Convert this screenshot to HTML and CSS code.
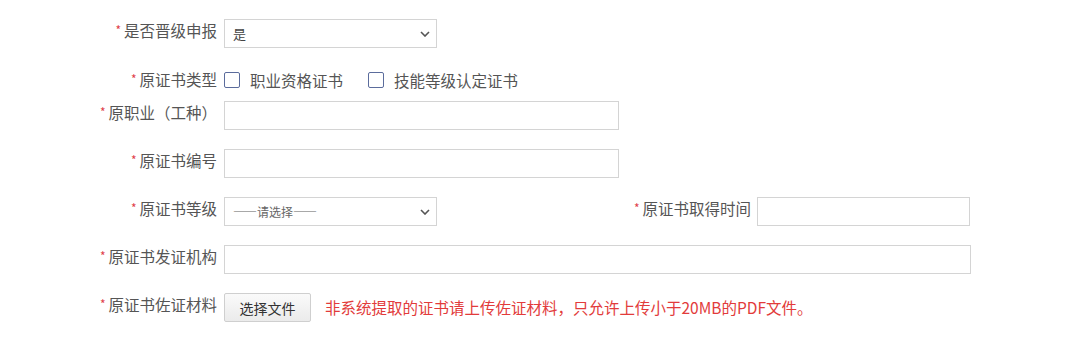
FILE: index.html
```html
<!DOCTYPE html>
<html lang="zh-CN">
<head>
    <meta charset="UTF-8">
    <title>原证书信息</title>
    <link rel="stylesheet" href="styles.css">
</head>
<body>

<div class="form">
    <div class="row">
        <label class="label"><span class="req">*</span>是否晋级申报</label>
        <select class="field select">
            <option>是</option>
            <option>否</option>
        </select>
    </div>

    <div class="row row-check">
        <label class="label"><span class="req">*</span>原证书类型</label>
        <label class="check"><input type="checkbox"> 职业资格证书</label>
        <label class="check"><input type="checkbox"> 技能等级认定证书</label>
    </div>

    <div class="row">
        <label class="label"><span class="req">*</span>原职业（工种）</label>
        <input type="text" class="field text">
    </div>

    <div class="row">
        <label class="label"><span class="req">*</span>原证书编号</label>
        <input type="text" class="field text">
    </div>

    <div class="row">
        <label class="label"><span class="req">*</span>原证书等级</label>
        <select class="field select placeholder">
            <option>——请选择——</option>
        </select>
        <label class="label label-wide"><span class="req">*</span>原证书取得时间</label>
        <input type="text" class="field date">
    </div>

    <div class="row">
        <label class="label"><span class="req">*</span>原证书发证机构</label>
        <input type="text" class="field text-long">
    </div>

    <div class="row">
        <label class="label"><span class="req">*</span>原证书佐证材料</label>
        <button class="file-btn">选择文件</button>
        <span class="hint">非系统提取的证书请上传佐证材料，只允许上传小于20MB的PDF文件。</span>
    </div>
</div>

</body>
</html>
```

FILE: styles.css
```css
body {
    margin: 0;
    background: #fff;
    font-family: "Noto Sans CJK SC", "Noto Sans", sans-serif;
    color: #555;
}
.form {
    padding: 19px 0 0 100px;
}
.row {
    display: flex;
    align-items: flex-start;
    height: 29px;
    margin-bottom: 19px;
}
.row-check {
    height: 22px;
    margin-top: 21px;
    margin-bottom: 10px;
    align-items: center;
}
.label {
    width: 117px;
    flex: none;
    text-align: right;
    font-size: 15.5px;
    line-height: 22px;
    margin-right: 7px;
    white-space: nowrap;
}
.label-wide {
    width: 151px;
    margin-left: 163px;
    margin-right: 6px;
}
.req {
    color: #e0404a;
    font-size: 12px;
    margin-right: 3px;
    position: relative;
    top: -2px;
}
.field {
    box-sizing: border-box;
    height: 29px;
    border: 1px solid #d4d4d4;
    background: #fff;
    font-family: inherit;
    color: #444;
    margin: 0;
}
.select {
    width: 213px;
    padding: 0 8px;
    font-size: 13px;
    appearance: none;
    background-image: url("data:image/svg+xml,%3Csvg xmlns='http://www.w3.org/2000/svg' width='10' height='6'%3E%3Cpath d='M1 1l4 4 4-4' fill='none' stroke='%23555' stroke-width='1.6'/%3E%3C/svg%3E");
    background-repeat: no-repeat;
    background-position: right 6px center;
}
.placeholder {
    font-size: 12px;
    color: #666;
}
.text {
    width: 395px;
}
.text-long {
    width: 747px;
}
.date {
    width: 213px;
}
.check {
    display: flex;
    align-items: center;
    font-size: 15.5px;
    margin-right: 25px;
}
.check input {
    appearance: none;
    width: 16px;
    height: 16px;
    margin: 0 10px 0 0;
    border: 1px solid #5b6c9c;
    border-radius: 2px;
    background: #fff;
}
.file-btn {
    height: 29px;
    width: 87px;
    padding: 0;
    border: 1px solid #cfcfcf;
    border-radius: 2px;
    background: linear-gradient(#fafafa, #ebebeb);
    font-family: inherit;
    font-size: 14px;
    color: #333;
}
.hint {
    margin-left: 14px;
    font-size: 15.5px;
    line-height: 29px;
    color: #e23b3b;
    white-space: nowrap;
}
```
